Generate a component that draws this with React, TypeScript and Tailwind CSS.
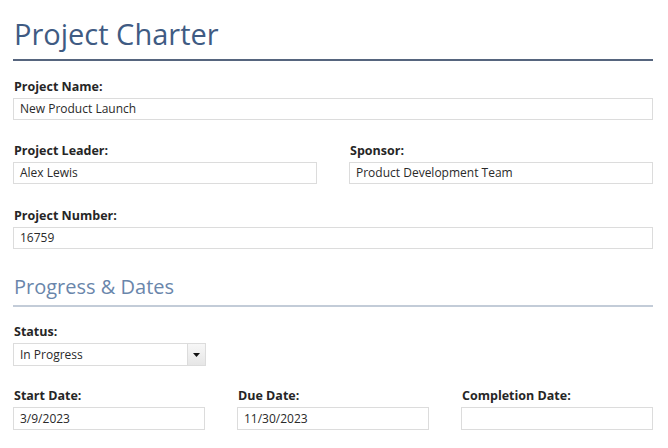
import React from "react";

function Field({ label, value, h = "h-[22px]" }: { label: string; value?: string; h?: string }) {
  return (
    <div>
      <div className="text-[12.5px] leading-4 font-bold text-[#262626] mb-[3px] pl-px">{label}</div>
      <div className={`${h} border border-[#dcdcdc] bg-white px-[6px] flex items-center text-[12px] text-[#2a2a2a]`}>
        {value}
      </div>
    </div>
  );
}

export default function App() {
  return (
    <div
      className="w-[668px] h-[448px] overflow-hidden bg-white pl-[13px] pr-[15px] pt-4"
      style={{ fontFamily: '"Open Sans", "Noto Sans", sans-serif' }}
    >
      <h1 className="text-[29px] leading-9 text-[#3f5b83] pb-[7px] border-b-2 border-[#56657e] pl-px">
        Project Charter
      </h1>

      <div className="mt-[18px]">
        <Field label="Project Name:" value="New Product Launch" />
      </div>

      <div className="mt-[23px] grid grid-cols-2 gap-x-8">
        <Field label="Project Leader:" value="Alex Lewis" />
        <Field label="Sponsor:" value="Product Development Team" />
      </div>

      <div className="mt-6">
        <Field label="Project Number:" value="16759" />
      </div>

      <h2 className="mt-[26px] text-[20px] leading-6 text-[#6a86ab] pb-[6px] border-b-2 border-[#c3ccd8] pl-px">
        Progress &amp; Dates
      </h2>

      <div className="mt-[17px] w-[193px]">
        <div className="text-[12.5px] leading-4 font-bold text-[#262626] mb-[3px] pl-px">Status:</div>
        <div className="h-[23px] border border-[#dcdcdc] bg-white flex items-stretch text-[12px] text-[#2a2a2a]">
          <div className="flex-1 px-[6px] flex items-center">In Progress</div>
          <div className="w-[18px] border-l border-[#dcdcdc] bg-gradient-to-b from-[#f7f7f7] to-[#e6e6e6] flex items-center justify-center">
            <svg width="7" height="4" viewBox="0 0 7 4">
              <path d="M0 0h7L3.5 4z" fill="#111" />
            </svg>
          </div>
        </div>
      </div>

      <div className="mt-[22px] grid grid-cols-3 gap-x-8">
        <Field label="Start Date:" value="3/9/2023" h="h-[23px]" />
        <Field label="Due Date:" value="11/30/2023" h="h-[23px]" />
        <Field label="Completion Date:" h="h-[23px]" />
      </div>
    </div>
  );
}
